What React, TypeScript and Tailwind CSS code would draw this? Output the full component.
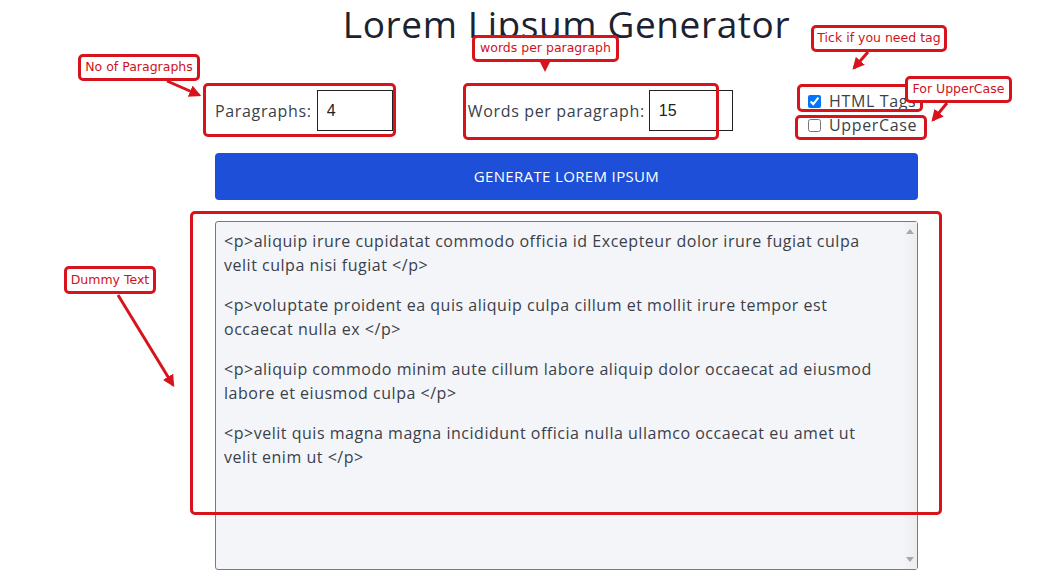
import React from "react";

const RED = "#d7141c";

function Box({ l, t, w, h }: { l: number; t: number; w: number; h: number }) {
  return (
    <div
      className="absolute rounded-[5px] border-[3px] border-[#d7141c]"
      style={{ left: l, top: t, width: w, height: h }}
    />
  );
}

function Callout({ l, t, w, h, text }: { l: number; t: number; w: number; h: number; text: string }) {
  return (
    <div
      className="absolute flex items-center justify-center rounded-[5px] border-[3px] border-[#d7141c] bg-white text-[12.5px] leading-none text-[#cf1220] font-['DejaVu_Sans',sans-serif] whitespace-nowrap"
      style={{ left: l, top: t, width: w, height: h }}
    >
      {text}
    </div>
  );
}

const paras: string[][] = [
  ["<p>aliquip irure cupidatat commodo officia id Excepteur dolor irure fugiat culpa", "velit culpa nisi fugiat </p>"],
  ["<p>voluptate proident ea quis aliquip culpa cillum et mollit irure tempor est", "occaecat nulla ex </p>"],
  ["<p>aliquip commodo minim aute cillum labore aliquip dolor occaecat ad eiusmod", "labore et eiusmod culpa </p>"],
  ["<p>velit quis magna magna incididunt officia nulla ullamco occaecat eu amet ut", "velit enim ut </p>"],
];

export default function App() {
  return (
    <div className="relative w-[1055px] h-[584px] overflow-hidden bg-white font-['Open_Sans',sans-serif] text-[#3a3f4a]">
      <div className="ml-[215px] w-[703px] flex flex-col">
        <h1 className="h-[46px] pt-[2px] text-center text-[37px] leading-[44px] tracking-[0.6px] font-medium text-[#1c2230]">
          Lorem Lipsum Generator
        </h1>

        <div className="mt-[44px] flex h-[41px] items-start justify-between text-[16px] tracking-[0.65px]">
          <div className="flex h-[41px] items-center">
            <span>Paragraphs:</span>
            <input
              readOnly
              value="4"
              className="ml-[5px] h-[41px] w-[76px] border border-[#222] pl-[9px] text-[16px] tracking-normal text-[#222] font-['Liberation_Sans',sans-serif] outline-none"
            />
          </div>
          <div className="flex h-[41px] items-center">
            <span>Words per paragraph:</span>
            <input
              readOnly
              value="15"
              className="ml-[4px] h-[41px] w-[84px] border border-[#222] pl-[9px] text-[16px] tracking-normal text-[#222] font-['Liberation_Sans',sans-serif] outline-none"
            />
          </div>
          <div className="-mt-[1px] flex w-[110px] flex-col leading-6 text-[16px]">
            <label className="flex h-6 items-center">
              <input type="checkbox" defaultChecked className="m-0 h-[13px] w-[13px]" />
              <span className="ml-[8px] whitespace-nowrap">HTML Tags</span>
            </label>
            <label className="flex h-6 items-center">
              <input type="checkbox" className="m-0 h-[13px] w-[13px]" />
              <span className="ml-[8px] whitespace-nowrap">UpperCase</span>
            </label>
          </div>
        </div>

        <button className="mt-[22px] h-[47px] w-full rounded-[4px] bg-[#1d4fd8] text-[15px] tracking-[0.35px] font-medium uppercase text-white">
          Generate Lorem Ipsum
        </button>

        <div className="mt-[21px] flex h-[349px] w-full rounded-[3px] border border-[#7a7a7a] bg-[#f4f5f9]">
          <div className="flex-1 pl-[8px] pt-[7px] text-[16px] leading-6 tracking-[0.52px] text-[#3a3f4a]">
            {paras.map((p, i) => (
              <div key={i} className="mb-4">
                {p.map((line, j) => (
                  <div key={j} className="whitespace-nowrap">
                    {line}
                  </div>
                ))}
              </div>
            ))}
          </div>
          <div className="flex w-[15px] flex-col items-center justify-between bg-gradient-to-r from-[#f4f5f9] to-[#ededf0] py-[7px]">
            <svg width="8" height="5" viewBox="0 0 8 5">
              <polygon points="0,5 8,5 4,0" fill="#a7a7a7" />
            </svg>
            <svg width="8" height="5" viewBox="0 0 8 5">
              <polygon points="0,0 8,0 4,5" fill="#a7a7a7" />
            </svg>
          </div>
        </div>
      </div>

      {/* annotation boxes */}
      <Box l={203} t={83} w={193} h={54} />
      <Box l={463} t={83} w={256} h={57} />
      <Box l={797} t={84} w={126} h={28} />
      <Box l={795} t={115} w={132} h={25} />
      <Box l={190} t={211} w={752} h={304} />

      {/* arrows */}
      <svg className="pointer-events-none absolute left-0 top-0" width="1055" height="584">
        <defs>
          <marker id="ah" viewBox="0 0 10 10" refX="8" refY="5" markerWidth="4" markerHeight="4" orient="auto-start-reverse">
            <path d="M0,0 L10,5 L0,10 z" fill={RED} />
          </marker>
        </defs>
        <line x1="167" y1="81" x2="199" y2="95" stroke={RED} strokeWidth="3" markerEnd="url(#ah)" />
        <polygon points="540,62 550,62 545,72" fill={RED} />
        <line x1="868" y1="52" x2="854" y2="68" stroke={RED} strokeWidth="3" markerEnd="url(#ah)" />
        <line x1="947" y1="103" x2="933" y2="120" stroke={RED} strokeWidth="3" markerEnd="url(#ah)" />
        <line x1="118" y1="295" x2="173" y2="385" stroke={RED} strokeWidth="3" markerEnd="url(#ah)" />
      </svg>

      {/* callouts */}
      <Callout l={78} t={54} w={122} h={27} text="No of Paragraphs" />
      <Callout l={472} t={35} w={147} h={27} text="words per paragraph" />
      <Callout l={811} t={25} w={136} h={27} text="Tick if you need tag" />
      <Callout l={905} t={76} w={107} h={27} text="For UpperCase" />
      <Callout l={64} t={266} w={92} h={28} text="Dummy Text" />
    </div>
  );
}
